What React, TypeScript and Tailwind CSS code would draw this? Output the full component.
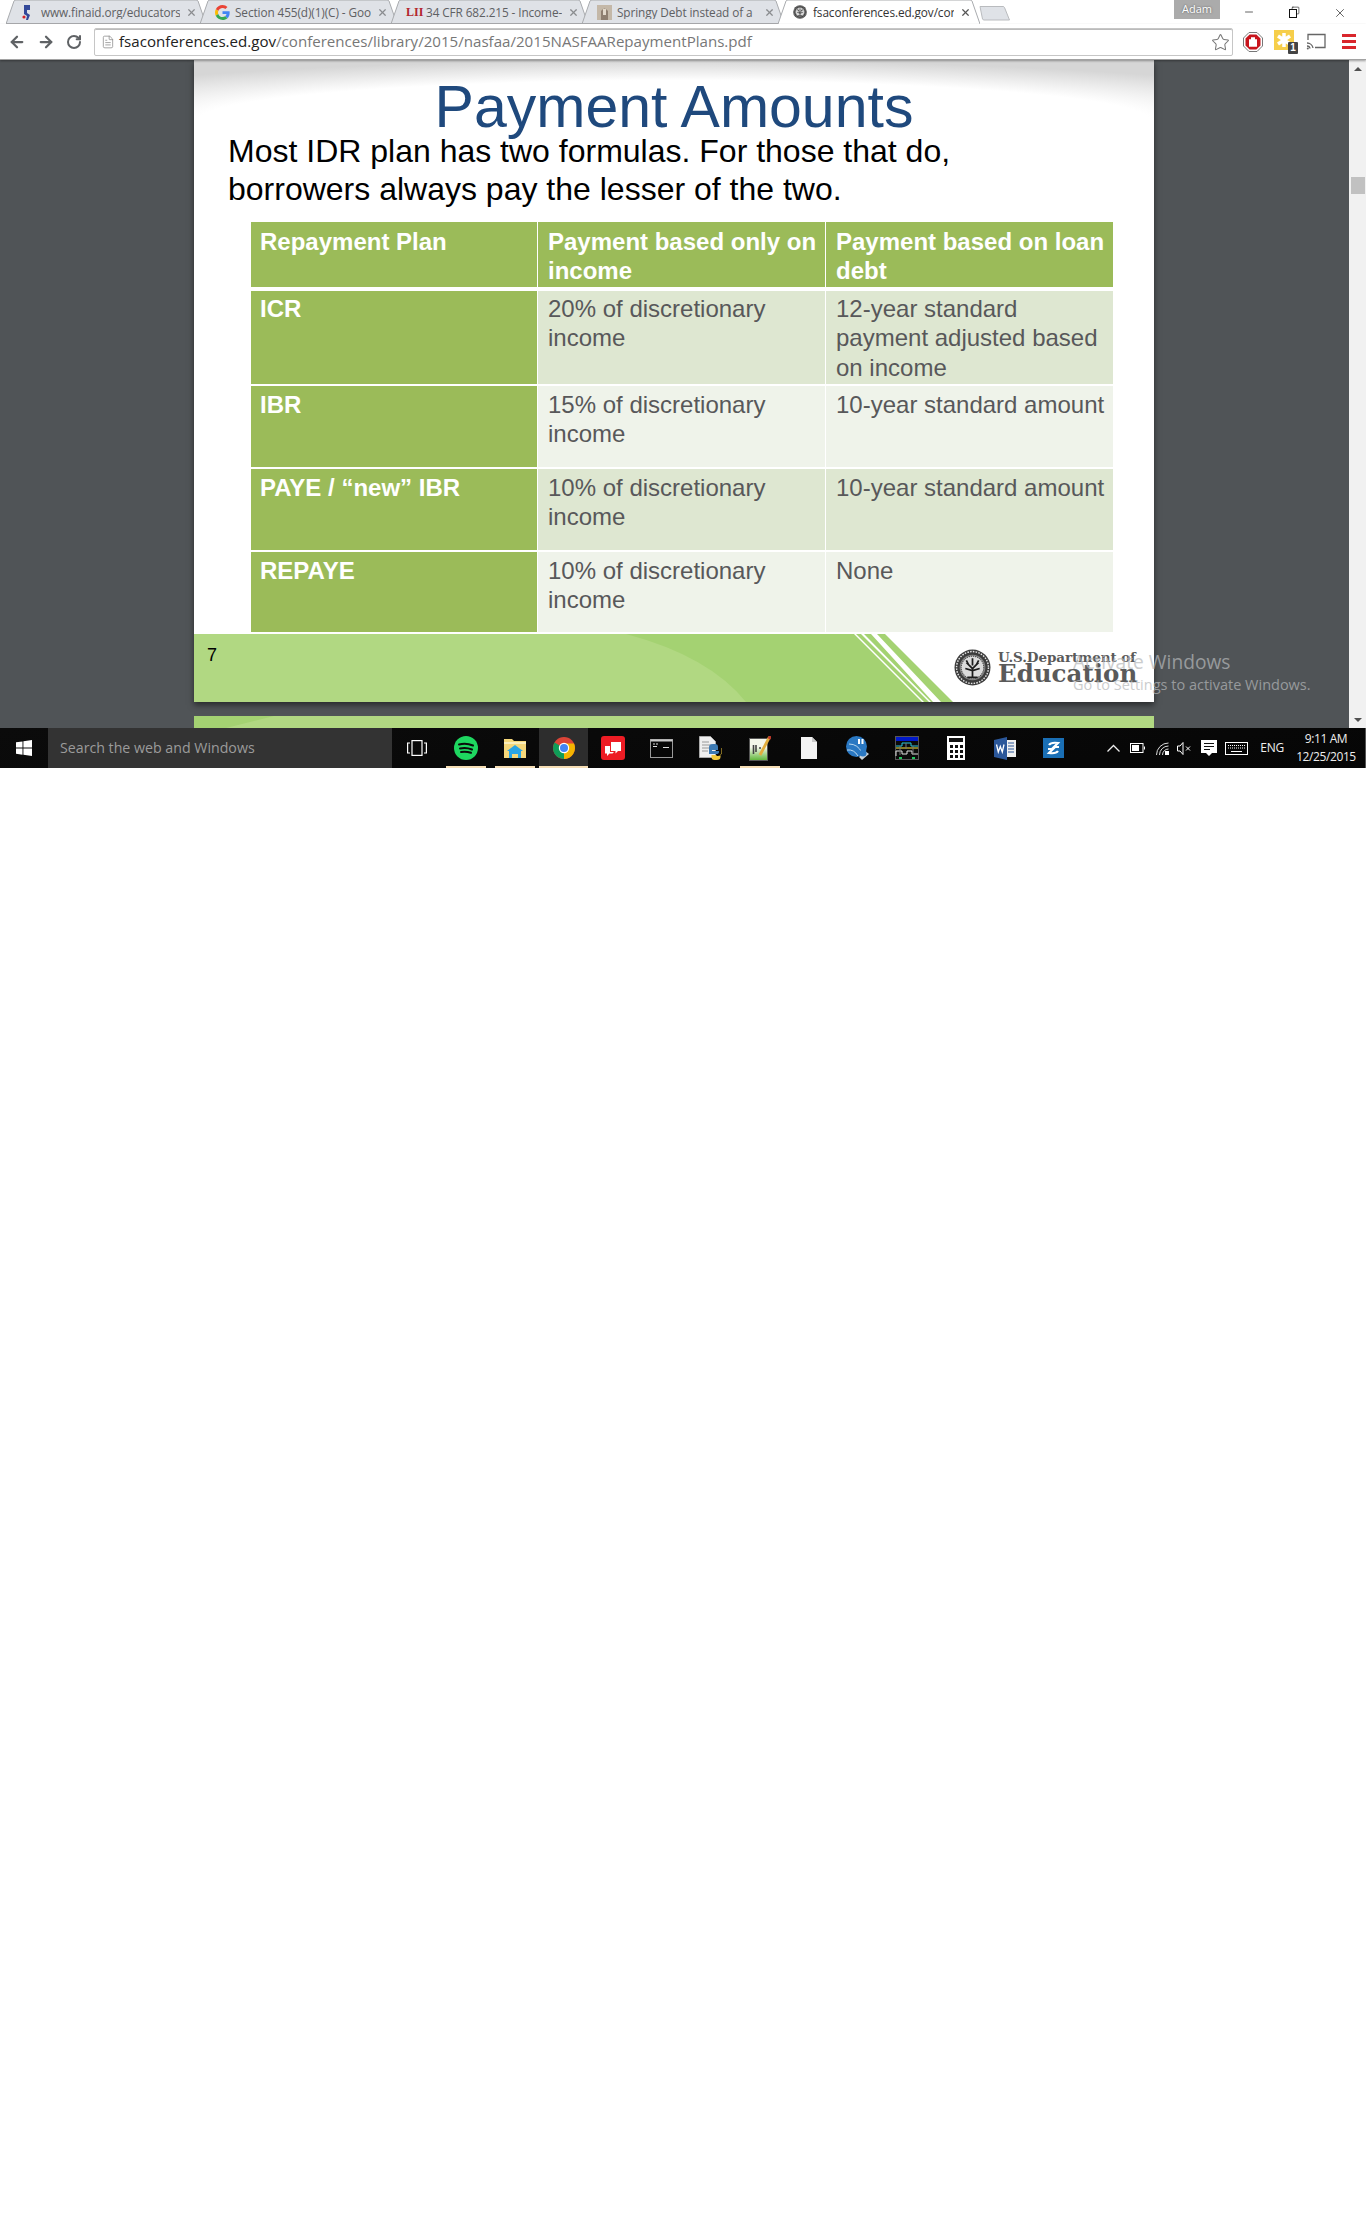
import React from 'react';
import { ArrowLeft, ArrowRight, RotateCw, FileText, Star, X, Minus, Square } from 'lucide-react';

const sans = "font-['Liberation_Sans',Arial,sans-serif]";
const ui = "font-['Open_Sans','Noto_Sans',sans-serif]";

function Seal({ size = 36 }: { size?: number }) {
  return (
    <svg width={size} height={size} viewBox="0 0 36 36">
      <circle cx="18" cy="18" r="17.500" fill="#3c3c3c" />
      <circle cx="18" cy="18" r="15.500" fill="none" stroke="#e5e5e5" strokeWidth="1.400" strokeDasharray="1.500 1.200" />
      <circle cx="18" cy="18" r="12.500" fill="#8a8a8a" />
      <circle cx="18" cy="18" r="11" fill="#dcdcdc" stroke="#444" strokeWidth="1" strokeDasharray="1 1" />
      <path d="M18 27v-9M13 27.500h10M18 19l-6-6M18 19l6-6M18 21l-7-2M18 21l7-2M18 16v-7M14 15l-2-4M22 15l2-4" stroke="#1c1c1c" strokeWidth="1.700" fill="none" />
    </svg>
  );
}

function GoogleG() {
  return (
    <svg width="15" height="15" viewBox="0 0 48 48">
      <path fill="#EA4335" d="M24 9.500c3.500 0 6.600 1.200 9.100 3.600l6.800-6.800C35.800 2.400 30.400 0 24 0 14.600 0 6.500 5.400 2.600 13.200l7.900 6.200C12.400 13.700 17.700 9.500 24 9.500z" />
      <path fill="#4285F4" d="M46.900 24.500c0-1.600-.1-3.100-.4-4.500H24v9h12.900c-.6 3-2.200 5.500-4.700 7.200l7.700 6c4.500-4.200 7-10.300 7-17.700z" />
      <path fill="#FBBC05" d="M10.500 28.600c-.5-1.400-.8-3-.8-4.600s.3-3.200.8-4.600l-7.900-6.200C.9 16.500 0 20.100 0 24s.9 7.500 2.600 10.800l7.900-6.200z" />
      <path fill="#34A853" d="M24 48c6.500 0 11.900-2.100 15.900-5.800l-7.700-6c-2.100 1.400-4.900 2.300-8.200 2.300-6.300 0-11.600-4.200-13.500-10l-7.900 6.200C6.500 42.600 14.600 48 24 48z" />
    </svg>
  );
}

function Tab({ width, active, icon, label, textClass }: { width: number; active?: boolean; icon: React.ReactNode; label: string; textClass?: string }) {
  return (
    <div className="relative h-[24px] flex items-center shrink-0 pl-[15px] pr-[9px] -mr-[6px]" style={{ width }}>
      <svg className="absolute inset-0" width={width} height="24" viewBox={`0 0 ${width} 24`}>
        <path
          d={`M0 24 L8 1 Q8.500 0 10 0 L${width - 10} 0 Q${width - 8.500} 0 ${width - 8} 1 L${width} 24`}
          fill={active ? '#ffffff' : '#dfe2e7'}
          stroke="#a9abae"
          strokeWidth="1"
        />
        {!active && <path d={`M0 23.500H${width}`} stroke="#a9abae" />}
      </svg>
      <div className="relative flex items-center w-full min-w-0">
        <div className="w-[20px] shrink-0 flex items-center">{icon}</div>
        <span className={`flex-1 min-w-0 overflow-hidden whitespace-nowrap text-[11.800px] leading-[14px] tracking-[-0.1px] ${ui} ${textClass ?? 'text-[#5e6063]'}`}>{label}</span>
        <X size={11} strokeWidth={2.600} className={`ml-[6px] shrink-0 ${active ? 'text-[#555]' : 'text-[#8a8c8f]'}`} />
      </div>
    </div>
  );
}

function TabBar() {
  return (
    <div className="h-[24px] flex items-start bg-white relative z-10">
      <div className="w-[6px] shrink-0" />
      <Tab
        width={200}
        label="www.finaid.org/educators/"
        icon={
          <svg width="13" height="17" viewBox="0 0 13 17">
            <path d="M3 1h6v5H6v3l3 2-2 5H5l1-4-3-2z" fill="#33499a" />
            <circle cx="3" cy="13" r="1.600" fill="#d2232a" />
          </svg>
        }
      />
      <Tab width={197} label="Section 455(d)(1)(C) - Goo" icon={<GoogleG />} />
      <Tab
        width={197}
        label="34 CFR 682.215 - Income-l"
        icon={<span className="font-['Liberation_Serif',serif] font-bold text-[12px] text-[#b3262e] leading-none">LII</span>}
      />
      <Tab
        width={202}
        label="Springy Debt instead of a"
        icon={
          <svg width="15" height="15" viewBox="0 0 15 15">
            <rect width="15" height="15" fill="#c4b8a8" />
            <path d="M4 15V6q3.500-5 7 0v9z" fill="#8f7f70" />
            <rect x="6" y="4" width="3" height="6" fill="#e3d9cb" />
          </svg>
        }
      />
      <Tab width={202} active label="fsaconferences.ed.gov/cor" textClass="text-[#333]" icon={<Seal size={14} />} />
      <div className="relative w-[34px] h-[14px] mt-[6px] ml-[5px] shrink-0">
        <svg width="34" height="15" viewBox="0 0 34 15">
          <path d="M1 0.500h23q1 0 1.500 1l5 12.500H5q-1 0-1.500-1z" fill="#dfe2e7" stroke="#b9bbbe" />
        </svg>
      </div>
      <div className="flex-1" />
      <div className={`w-[46px] h-[19px] bg-[#ababab] text-white text-[11px] leading-[17px] text-center [text-shadow:0_0_2px_#555] ${ui}`}>Adam</div>
      <div className="w-[146px] h-[24px] flex items-start justify-between pt-[6px] pl-[23px] pr-[19px] text-[#111]">
        <Minus size={12} strokeWidth={1.300} />
        <div className="relative w-[11px] h-[12px]">
          <Square size={9} strokeWidth={1.600} className="absolute right-0 top-0" />
          <div className="absolute left-0 bottom-0 w-[8px] h-[9px] border border-[#111] bg-white" />
        </div>
        <X size={14} strokeWidth={1.100} />
      </div>
    </div>
  );
}

function Toolbar() {
  return (
    <div className="h-[36px] flex items-center bg-white border-b-[1px] border-[#a2a2a2] shadow-[0_1px_2px_rgba(0,0,0,0.35)] relative z-10 pl-[8px]">
      <div className="flex items-center gap-[11px] w-[86px] shrink-0 text-[#5f6265]">
        <ArrowLeft size={18} strokeWidth={3} />
        <ArrowRight size={18} strokeWidth={3} />
        <RotateCw size={16} strokeWidth={3} />
      </div>
      <div className="flex-1 h-[28px] mt-[1px] flex items-center border border-[#c6c6c6] rounded-[2px] bg-white pl-[6px] pr-[2px] shadow-[inset_0_1px_0_#bbb]">
        <FileText size={14} strokeWidth={1.300} className="text-[#8a8a8a] shrink-0" />
        <span className={`ml-[4px] text-[15.100px] leading-none whitespace-nowrap text-[#222] ${ui}`}>
          fsaconferences.ed.gov<span className="text-[#777]">/conferences/library/2015/nasfaa/2015NASFAARepaymentPlans.pdf</span>
        </span>
        <div className="flex-1" />
        <Star size={19} strokeWidth={1.300} className="text-[#777]" />
      </div>
      <div className="w-[133px] shrink-0 flex items-center pl-[10px]">
        <svg width="20" height="20" viewBox="0 0 20 20">
          <path d="M6 0.500h8L19.500 6v8L14 19.500H6L0.500 14V6z" fill="#fff" stroke="#777" />
          <path d="M6.600 2.500h6.800l4.100 4.100v6.800l-4.100 4.100H6.600l-4.100-4.100V6.600z" fill="#c8141c" />
          <path d="M7 14V8M9 14V6M11 14V6M13 14V8" stroke="#fff" strokeWidth="2" strokeLinecap="round" />
        </svg>
        <div className="relative w-[20px] h-[24px] ml-[11px]">
          <svg width="20" height="20" viewBox="0 0 20 20">
            <rect width="20" height="20" fill="#f6ce4a" />
            <path d="M10 3v14M4 6l12 8M16 6L4 14" stroke="#fff" strokeWidth="3.500" />
          </svg>
          <span className={`absolute -right-[4px] bottom-0 w-[10px] h-[12px] bg-[#444] text-white text-[10px] leading-[12px] text-center font-bold rounded-[1px] ${sans}`}>1</span>
        </div>
        <svg className="ml-[12px]" width="20" height="18" viewBox="0 0 20 18">
          <path d="M2 7V1.500h17v13H9" fill="none" stroke="#666" strokeWidth="1.300" />
          <path d="M1 10a6 6 0 0 1 6 5M1 13a3 3 0 0 1 3 2.500" fill="none" stroke="#666" strokeWidth="1.300" />
          <circle cx="1.800" cy="15.500" r="1" fill="#666" />
        </svg>
        <div className="ml-[16px] flex flex-col gap-[3px] w-[14px]">
          <div className="h-[3px] bg-[#d9262c]" />
          <div className="h-[3px] bg-[#d9262c]" />
          <div className="h-[3px] bg-[#d9262c]" />
        </div>
      </div>
    </div>
  );
}

const rows = [
  { plan: 'ICR', income: ['20% of discretionary', 'income'], loan: ['12-year standard', 'payment adjusted based', 'on income'], h: 'h-[93px]', bg: 'bg-[#dee7d1]', pt: 'pt-[3px]' },
  { plan: 'IBR', income: ['15% of discretionary', 'income'], loan: ['10-year standard amount'], h: 'h-[81px]', bg: 'bg-[#eff3ea]', pt: 'pt-[4px]' },
  { plan: 'PAYE / “new” IBR', income: ['10% of discretionary', 'income'], loan: ['10-year standard amount'], h: 'h-[81px]', bg: 'bg-[#dee7d1]', pt: 'pt-[4px]' },
  { plan: 'REPAYE', income: ['10% of discretionary', 'income'], loan: ['None'], h: 'h-[80px]', bg: 'bg-[#eff3ea]', pt: 'pt-[4px]' },
];

function Lines({ lines }: { lines: string[] }) {
  return (
    <>
      {lines.map((l) => (
        <div key={l}>{l}</div>
      ))}
    </>
  );
}

function PaymentTable() {
  const th = 'h-[65px] bg-[#9bbb59] text-white font-bold pt-[5px]';
  return (
    <div className={`ml-[57px] w-[862px] text-[24px] leading-[29.300px] ${sans}`}>
      <div className="grid grid-cols-[286px_287px_287px] gap-x-[1px] mb-[4px]">
        <div className={`${th} pl-[9px]`}>Repayment Plan</div>
        <div className={`${th} pl-[10px]`}>
          <div>Payment based only on</div>
          <div>income</div>
        </div>
        <div className={`${th} pl-[10px]`}>
          <div>Payment based on loan</div>
          <div>debt</div>
        </div>
      </div>
      <div className="flex flex-col gap-[2px]">
        {rows.map((r) => (
          <div key={r.plan} className={`grid grid-cols-[286px_287px_287px] gap-x-[1px] ${r.h}`}>
            <div className={`bg-[#9bbb59] text-white font-bold pl-[9px] ${r.pt}`}>{r.plan}</div>
            <div className={`${r.bg} text-[#58585a] pl-[10px] ${r.pt}`}>
              <Lines lines={r.income} />
            </div>
            <div className={`${r.bg} text-[#58585a] pl-[10px] ${r.pt}`}>
              <Lines lines={r.loan} />
            </div>
          </div>
        ))}
      </div>
    </div>
  );
}

function SlideFooter() {
  return (
    <div className="relative h-[68px] mt-[2px]">
      <svg className="absolute inset-0" width="960" height="68" viewBox="0 0 960 68">
        <rect width="960" height="68" fill="#fff" />
        <path d="M0 0H691L759 68H0z" fill="#a4d272" />
        <path d="M0 0H432Q515 22 552 68H0z" fill="#b1d882" />
        <path d="M660 0h2l68 68h-2zM667 0h3l67 68h-2zM677 0h6l64 68h-8z" fill="#fff" />
      </svg>
      <div className={`relative pl-[13px] pt-[12px] text-[18px] leading-none text-black ${sans}`}>7</div>
      <div className="absolute left-[760px] top-[15px] flex items-center">
        <Seal size={37} />
        <div className="ml-[7px] text-[#5a5a5a] font-['DejaVu_Serif',serif] font-bold">
          <div className="text-[13.500px] leading-[13px] whitespace-nowrap tracking-[-0.1px]">U.S.Department of</div>
          <div className="text-[24.500px] leading-[20px] whitespace-nowrap">Education</div>
        </div>
      </div>
    </div>
  );
}

function Viewer() {
  return (
    <div className="h-[668px] flex bg-[#505457] relative overflow-hidden">
      <div className="flex-1 flex flex-col items-center pr-[1px]">
        <div className="w-[960px] h-[642px] shrink-0 bg-white shadow-[0_3px_6px_rgba(0,0,0,0.5)] relative overflow-hidden">
          <div className="absolute left-0 right-0 top-0 h-[60px] bg-[radial-gradient(ellipse_75%_100%_at_50%_100%,#ffffff_66%,#d6d6d6_100%)]" />
          <div className={`relative text-center text-[59px] leading-[59px] h-[72px] pt-[18px] text-[#1f497d] ${sans}`}>Payment Amounts</div>
          <div className={`relative pl-[34px] text-[32px] leading-[38px] text-black ${sans}`}>
            <div>Most IDR plan has two formulas. For those that do,</div>
            <div>borrowers always pay the lesser of the two.</div>
          </div>
          <div className="relative mt-[14px]">
            <PaymentTable />
          </div>
          <SlideFooter />
        </div>
        <div className="w-[960px] h-[20px] mt-[14px] shrink-0 relative overflow-hidden bg-[#b1d882]">
          <div className="absolute left-0 top-0 w-[80px] h-[12px] bg-[#a4d272] [clip-path:polygon(0_0,100%_0,40%_100%,0_100%)]" />
        </div>
      </div>
      <div className="w-[17px] shrink-0 bg-[#f1f1f1] flex flex-col items-center">
        <div className="h-[17px] flex items-center justify-center">
          <div className="w-0 h-0 border-x-[4px] border-x-transparent border-b-[4px] border-b-[#505050]" />
        </div>
        <div className="mt-[100px] w-[14px] h-[17px] bg-[#c1c1c1]" />
        <div className="flex-1" />
        <div className="h-[17px] flex items-center justify-center">
          <div className="w-0 h-0 border-x-[4px] border-x-transparent border-t-[4px] border-t-[#505050]" />
        </div>
      </div>
      <div className={`absolute left-[1073px] top-[588px] text-[19.200px] leading-[27px] text-[#b6b8ba] opacity-70 whitespace-nowrap ${ui}`}>Activate Windows</div>
      <div className={`absolute left-[1073px] top-[615px] text-[#b6b8ba] opacity-70 whitespace-nowrap text-[14.500px] leading-[20px] ${ui}`}>Go to Settings to activate Windows.</div>
    </div>
  );
}

function TaskIcon({ children, active, run }: { children: React.ReactNode; active?: boolean; run?: boolean }) {
  return (
    <div className={`relative w-[49px] h-[40px] shrink-0 flex items-center justify-center ${active ? 'bg-[#2d2d2d]' : ''}`}>
      {children}
      {run && <div className={`absolute bottom-0 h-[2px] bg-[#f6deb5] ${active ? 'left-0 right-0' : 'left-[5px] right-[4px]'}`} />}
    </div>
  );
}

function Taskbar() {
  return (
    <div className={`h-[40px] flex items-stretch bg-[linear-gradient(170deg,#0b0b0b,#060606)] text-white ${ui}`}>
      <div className="w-[48px] shrink-0 flex items-center justify-center">
        <svg width="16" height="16" viewBox="0 0 16 16" fill="#fff">
          <path d="M0 2.300l6.500-.9v6.200H0zM7.400 1.300L16 0v7.600H7.400zM0 8.500h6.500v6.200L0 13.800zM7.400 8.500H16V16l-8.600-1.200z" />
        </svg>
      </div>
      <div className="w-[344px] shrink-0 bg-[#333333] flex items-center pl-[12px] text-[14.200px] text-[#9b9b9b]">Search the web and Windows</div>
      <div className="flex items-stretch">
        <TaskIcon>
          <svg width="20" height="16" viewBox="0 0 20 16" fill="none" stroke="#fff" strokeWidth="1.200">
            <rect x="5" y="0.600" width="10" height="14.800" />
            <path d="M3 3H0.600v10H3M17 3h2.400v10H17" />
          </svg>
        </TaskIcon>
        <TaskIcon run>
          <svg width="24" height="24" viewBox="0 0 24 24">
            <circle cx="12" cy="12" r="12" fill="#1ed760" />
            <path d="M5 8.500q7-2 14 1M6 12.500q6-1.500 12 1M7 16q5-1 10 .8" fill="none" stroke="#0b0b0b" strokeWidth="2" strokeLinecap="round" />
          </svg>
        </TaskIcon>
        <TaskIcon run>
          <svg width="22" height="20" viewBox="0 0 22 20">
            <path d="M0 1h8l2 2h12v17H0z" fill="#f5d77a" />
            <rect y="4" width="22" height="2" fill="#fbeebc" />
            <path d="M5 20v-7l-2 0 8-6 8 6h-2v7h-3v-4H8v4z" fill="#2aa4e4" />
          </svg>
        </TaskIcon>
        <TaskIcon active run>
          <svg width="22" height="22" viewBox="0 0 22 22">
            <circle cx="11" cy="11" r="11" fill="#db4437" />
            <path d="M11 11L1.500 5.500A11 11 0 0 0 11 22z" fill="#0f9d58" />
            <path d="M11 11v11A11 11 0 0 0 21 6.500H11z" fill="#f4b400" />
            <circle cx="11" cy="11" r="5.200" fill="#fff" />
            <circle cx="11" cy="11" r="4" fill="#4285f4" />
          </svg>
        </TaskIcon>
        <TaskIcon>
          <svg width="24" height="24" viewBox="0 0 24 24">
            <rect width="24" height="24" rx="3" fill="#ed1c24" />
            <path d="M10 6h10v9h-3l-2.500 2.500V15H10z" fill="#fff" />
            <path d="M4 10h5v6h4l-1.500 1.500H8.500L6 20v-2.500H4z" fill="#fff" />
          </svg>
        </TaskIcon>
        <TaskIcon>
          <svg width="23" height="19" viewBox="0 0 23 19">
            <rect x="0.500" y="0.500" width="22" height="18" fill="#070707" stroke="#9a9a9a" />
            <rect x="0.500" y="0.500" width="22" height="2" fill="#c9c9c9" />
            <path d="M3 5h2M6 5h2M3 7.500h4M13 8.500h6" stroke="#ddd" strokeWidth="1" />
          </svg>
        </TaskIcon>
        <TaskIcon>
          <svg width="23" height="24" viewBox="0 0 23 24">
            <path d="M0.500 0.500h11l5 5v16H0.500z" fill="#efefef" stroke="#aaa" />
            <path d="M3 6h7M3 9h10M3 12h8M3 15h6" stroke="#999" />
            <path d="M10 11q0-3 4-3h2q3 0 3 3v3h-6v1h7v1q0 2-3 2h-7z" fill="#3d7ab3" />
            <path d="M22.500 12v5q0 3-4 3h-1v-1h-5v2q0 3 3 3h2q4 0 4-3v-3h1q1 0 1-2v-4z" fill="#f2c83a" />
          </svg>
        </TaskIcon>
        <TaskIcon run>
          <svg width="22" height="25" viewBox="0 0 22 25">
            <defs>
              <linearGradient id="np" x1="0" y1="0" x2="0" y2="1">
                <stop offset="0.400" stopColor="#f4f6ea" />
                <stop offset="1" stopColor="#5db536" />
              </linearGradient>
            </defs>
            <rect x="0.500" y="2.500" width="18" height="22" fill="url(#np)" stroke="#555" />
            <path d="M4.500 9v9M7 9v7M10 12h2" stroke="#444" strokeWidth="1.600" />
            <path d="M20.500 1L11 19" stroke="#e2ad3c" strokeWidth="2.800" />
            <path d="M21.500 0l-1.500 3" stroke="#c0392b" strokeWidth="2.800" />
          </svg>
        </TaskIcon>
        <TaskIcon>
          <svg width="16" height="22" viewBox="0 0 16 22">
            <path d="M0 0h11l5 5v17H0z" fill="#f3f3f3" />
            <path d="M11 0l5 5h-5z" fill="#c9c9c9" />
          </svg>
        </TaskIcon>
        <TaskIcon>
          <svg width="23" height="24" viewBox="0 0 23 24">
            <circle cx="10.500" cy="10.500" r="10.500" fill="#2a78c2" />
            <path d="M1 14q7-1 11 6M3 8q9 0 13 9" fill="none" stroke="#bcd9ef" strokeWidth="1" />
            <path d="M12 3h2v5h-2zM15.500 3h2v5h-2z" fill="#fff" />
            <path d="M13 21l6-6 4 3-7 6z" fill="#c9d2d8" />
            <circle cx="17" cy="17" r="3.500" fill="#2a78c2" />
          </svg>
        </TaskIcon>
        <TaskIcon>
          <svg width="24" height="24" viewBox="0 0 24 24">
            <rect x="0.500" y="0.500" width="23" height="23" fill="#0a0a0a" stroke="#555" />
            <rect x="1" y="1" width="22" height="4" fill="#0018c8" />
            <path d="M1 10h6V7h9v3h7" fill="none" stroke="#26c6da" />
            <path d="M1 12h22" stroke="#ffeb3b" />
            <path d="M1 20v-5h6v3h5v-3h5v3h6" fill="none" stroke="#e0e0e0" />
            <path d="M4 21h3v2H4zM17 21h3v2h-3z" fill="#22c55e" />
            <path d="M5 10v9M11 7v6M18 10v8" stroke="#777" />
          </svg>
        </TaskIcon>
        <TaskIcon>
          <svg width="18" height="24" viewBox="0 0 18 24">
            <rect width="18" height="24" fill="#fff" />
            <rect x="2" y="2" width="14" height="4" fill="#111" />
            <path d="M3 9h3v3H3zM8 9h3v3H8zM13 9h3v3h-3zM3 14h3v3H3zM8 14h3v3H8zM13 14h3v3h-3zM3 19h3v3H3zM8 19h3v3H8zM13 19h3v3h-3z" fill="#111" />
          </svg>
        </TaskIcon>
        <TaskIcon>
          <svg width="22" height="23" viewBox="0 0 22 23">
            <rect x="9" y="3" width="13" height="17" fill="#f0f0f0" />
            <path d="M0 3l13-3v23L0 20z" fill="#2b579a" />
            <path d="M14 6h6M14 9h6M14 12h6M14 15h6" stroke="#2b579a" />
            <path d="M2.500 7.500l1.800 7.500 2-5.500 2 5.500 1.700-7.500" fill="none" stroke="#fff" strokeWidth="1.300" />
          </svg>
        </TaskIcon>
        <TaskIcon>
          <svg width="21" height="20" viewBox="0 0 21 20">
            <rect width="21" height="20" fill="#1a6fb5" />
            <path d="M6 7q2-3 9-2l-4 4h5M15 13q-2 3-9 2l4-4H5" fill="none" stroke="#fff" strokeWidth="2.200" />
          </svg>
        </TaskIcon>
      </div>
      <div className="flex-1" />
      <div className="flex items-center text-[#eee]">
        <svg width="13" height="8" viewBox="0 0 13 8" fill="none" stroke="#eee" strokeWidth="1.300">
          <path d="M0.500 7.500L6.500 1.500l6 6" />
        </svg>
        <svg className="ml-[10px]" width="15" height="10" viewBox="0 0 15 10" fill="none" stroke="#fff">
          <rect x="0.500" y="0.500" width="12.500" height="9" />
          <rect x="2" y="2" width="7" height="6" fill="#fff" stroke="none" />
          <path d="M14.500 3.500v3" />
        </svg>
        <svg className="ml-[11px]" width="13" height="13" viewBox="0 0 13 13" fill="none" stroke="#ddd" strokeWidth="1">
          <path d="M0.500 13A12 12 0 0 1 12.500 1M3.500 13A9 9 0 0 1 12.500 4M6.500 13a6 6 0 0 1 6-6" />
          <rect x="9" y="9" width="4" height="4" fill="#fff" stroke="none" />
        </svg>
        <svg className="ml-[8px]" width="14" height="13" viewBox="0 0 14 13" fill="none" stroke="#fff" strokeWidth="1">
          <path d="M0.500 4h2.500L6 0.500v12L3 9H0.500zM9 4.500l4 4M13 4.500l-4 4" />
        </svg>
        <svg className="ml-[10px]" width="16" height="16" viewBox="0 0 16 16">
          <path d="M0 0h16v13h-5l-3 3-3-3H0z" fill="#fff" />
          <path d="M3 3.500h10M3 6.500h10M3 9.500h6" stroke="#111" />
        </svg>
        <svg className="ml-[8px]" width="23" height="13" viewBox="0 0 23 13" fill="none" stroke="#fff">
          <rect x="0.500" y="0.500" width="22" height="12" />
          <path d="M3 3.500h17M3 6h17" strokeDasharray="1 1" />
          <path d="M6 9.500h11" />
        </svg>
        <span className="ml-[12px] text-[12px] tracking-[-0.2px]">ENG</span>
        <div className="ml-[11px] w-[62px] text-center text-[12px] leading-[18px] tracking-[-0.4px]">
          <div>9:11 AM</div>
          <div>12/25/2015</div>
        </div>
      </div>
      <div className="w-[9px] border-r border-[#555]" />
    </div>
  );
}

export default function App() {
  return (
    <div className="w-[1366px] h-[2230px] bg-white overflow-hidden">
      <TabBar />
      <Toolbar />
      <Viewer />
      <Taskbar />
    </div>
  );
}
